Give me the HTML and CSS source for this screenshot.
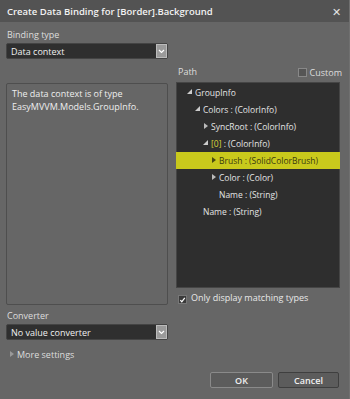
FILE: index.html
```html
<!DOCTYPE html>
<html lang="en">
<head>
    <meta charset="UTF-8">
    <title>Create Data Binding</title>
    <link rel="stylesheet" href="styles.css">
</head>
<body>
    <div class="dialog">
        <div class="titlebar">
            <span class="title">Create Data Binding for [Border].Background</span>
            <span class="close">&#x2715;</span>
        </div>

        <div class="content">
            <div class="label">Binding type</div>
            <div class="select">
                <span>Data context</span>
                <span class="select-btn"><svg width="7" height="5" viewBox="0 0 7 5"><path d="M1 1 L3.5 3.5 L6 1" fill="none" stroke="#fff" stroke-width="1.2"/></svg></span>
            </div>

            <div class="main">
                <div class="path-head">
                    <span class="label">Path</span>
                    <span class="check-label"><span class="box"></span>Custom</span>
                </div>

                <div class="info">
                    <p>The data context is of type</p>
                    <p>EasyMVVM.Models.GroupInfo.</p>
                </div>

                <div class="tree">
                    <div class="row lvl0"><span class="arrow open"></span>GroupInfo</div>
                    <div class="row lvl1"><span class="arrow open"></span>Colors : (ColorInfo)</div>
                    <div class="row lvl2"><span class="arrow closed"></span>SyncRoot : (ColorInfo)</div>
                    <div class="row lvl2"><span class="arrow open"></span><span class="mark">[0]</span>&nbsp;: (ColorInfo)</div>
                    <div class="row lvl3 selected"><span class="arrow closed"></span>Brush : (SolidColorBrush)</div>
                    <div class="row lvl3"><span class="arrow closed"></span>Color : (Color)</div>
                    <div class="row lvl3"><span class="arrow none"></span>Name : (String)</div>
                    <div class="row lvl1"><span class="arrow none"></span>Name : (String)</div>
                </div>

                <div class="match">
                    <span class="box checked"><svg width="8" height="8" viewBox="0 0 8 8"><path d="M1.5 4.2 L3.2 6 L6.6 1.5" fill="none" stroke="#fff" stroke-width="1.4"/></svg></span>
                    Only display matching types
                </div>
            </div>

            <div class="label converter">Converter</div>
            <div class="select">
                <span>No value converter</span>
                <span class="select-btn"><svg width="7" height="5" viewBox="0 0 7 5"><path d="M1 1 L3.5 3.5 L6 1" fill="none" stroke="#fff" stroke-width="1.2"/></svg></span>
            </div>

            <div class="more"><span class="arrow closed"></span>More settings</div>

            <div class="buttons">
                <button class="btn ok">OK</button>
                <button class="btn">Cancel</button>
            </div>
        </div>
    </div>
</body>
</html>
```

FILE: styles.css
```css
/* Reset */
* {
    margin: 0;
    padding: 0;
    box-sizing: border-box;
}

body {
    width: 350px;
    height: 399px;
    background: #666;
    font-family: 'Open Sans', 'Noto Sans', sans-serif;
    font-size: 9px;
    color: #e8e8e8;
    overflow: hidden;
}

.dialog {
    width: 350px;
    height: 399px;
    border-right: 1px solid #707070;
}

/* Title bar */
.titlebar {
    height: 22px;
    background: #535353;
    display: flex;
    align-items: center;
    justify-content: space-between;
    padding: 0 8px 0 7px;
}

.title {
    font-size: 9.5px;
    font-weight: 600;
    color: #f2f2f2;
}

.close {
    font-size: 11px;
    color: #e4e4e4;
}

/* Content */
.content {
    padding: 7px 10px 0 6px;
}

.label {
    color: #ddd;
    line-height: 12px;
    padding-left: 1px;
}

.select {
    width: 162px;
    height: 16px;
    margin-top: 2px;
    background: #2f2f2f;
    border: 1px solid #444;
    border-radius: 2px;
    display: flex;
    align-items: center;
    justify-content: space-between;
    padding-left: 4px;
    color: #f0f0f0;
}

.select-btn {
    width: 11px;
    height: 14px;
    background: #9a9a9a;
    border: 1px solid #bbb;
    display: flex;
    align-items: center;
    justify-content: center;
}

/* Main area */
.main {
    display: grid;
    grid-template-columns: 162px 164px;
    grid-template-rows: 20px 206px 16px;
    column-gap: 8px;
    margin-top: 3px;
}

.path-head {
    grid-column: 2;
    grid-row: 1;
    display: flex;
    align-items: center;
    justify-content: space-between;
    padding-left: 1px;
}

.check-label {
    display: flex;
    align-items: center;
    gap: 3px;
    color: #ddd;
    margin-right: -2px;
}

.box {
    width: 9px;
    height: 9px;
    border: 1px solid #888;
    background: #555;
    display: inline-flex;
    align-items: center;
    justify-content: center;
}

.box.checked {
    background: #3a3a3a;
    border-color: #777;
}

.info {
    grid-column: 1;
    grid-row: 2 / 4;
    margin-top: 1px;
    margin-bottom: -1px;
    border: 1px solid #4e4e4e;
    border-radius: 2px;
    padding: 4px 5px;
    color: #eee;
}

.info p {
    line-height: 12.5px;
    white-space: nowrap;
}

/* Tree */
.tree {
    grid-column: 2;
    grid-row: 2;
    background: #2e2e2e;
    border: 1px solid #454545;
    padding-top: 1px;
    font-size: 8.5px;
}

.row {
    height: 17px;
    display: flex;
    align-items: center;
    color: #e4e4e4;
    white-space: nowrap;
}

.lvl0 { padding-left: 9px; }
.lvl1 { padding-left: 17px; }
.lvl2 { padding-left: 25px; }
.lvl3 { padding-left: 33px; }

.row.selected {
    background: #c9c91c;
    color: #3a3a10;
    margin: 0 -1px;
    padding-left: 34px;
}

.mark {
    color: #d6d63a;
}

.arrow {
    width: 9px;
    height: 9px;
    display: inline-block;
    position: relative;
    flex-shrink: 0;
}

.arrow.open::after {
    content: "";
    position: absolute;
    left: 1px;
    top: 1px;
    border-style: solid;
    border-width: 0 0 5px 5px;
    border-color: transparent transparent #ccc transparent;
}

.arrow.closed::after {
    content: "";
    position: absolute;
    left: 2px;
    top: 1px;
    width: 0;
    height: 0;
    border-style: solid;
    border-width: 3.5px 0 3.5px 4px;
    border-color: transparent transparent transparent #bbb;
}

.selected .arrow.closed::after {
    border-left-color: #4a4a10;
}

.match {
    grid-column: 2;
    grid-row: 3;
    display: flex;
    align-items: flex-end;
    gap: 4px;
    padding-left: 2px;
    color: #e8e8e8;
}

.converter {
    margin-top: 6px;
}

/* More settings */
.more {
    margin-top: 8px;
    display: flex;
    align-items: center;
    color: #ddd;
    padding-left: 2px;
}

.more .arrow.closed::after {
    border-left-color: #999;
}

/* Buttons */
.buttons {
    display: flex;
    justify-content: flex-end;
    gap: 5px;
    margin-top: 11px;
}

.btn {
    width: 63px;
    height: 16px;
    background: #5c5c5c;
    border: 1px solid #3f3f3f;
    border-radius: 2px;
    color: #f0f0f0;
    font-family: 'Open Sans', 'Noto Sans', sans-serif;
    font-size: 9px;
    font-weight: 600;
}

.btn.ok {
    border-color: #8a8a8a;
}

.btn + .btn {
    width: 61px;
}
```
